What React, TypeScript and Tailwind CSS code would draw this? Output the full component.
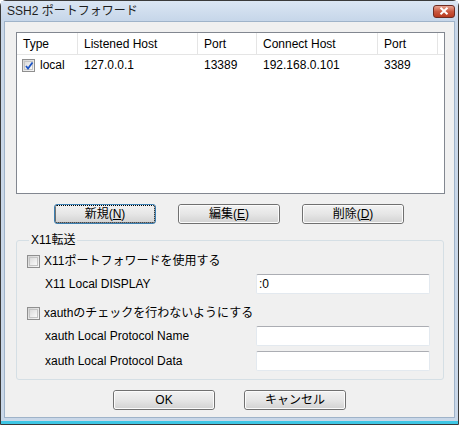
import React from "react";

const font = { fontFamily: '"Liberation Sans", "Noto Sans CJK JP", sans-serif' };

const CheckBox = ({ checked = false }: { checked?: boolean }) => (
  <span className="relative inline-flex h-[13px] w-[13px] shrink-0 items-center justify-center border border-[#8f8f8f] bg-gradient-to-br from-[#d4d4d4] to-[#f7f7f7]">
    <span className="h-[9px] w-[9px] border border-[#c4c4c4] bg-gradient-to-br from-[#dcdcdc] to-[#fafafa]" />
    {checked && (
      <svg className="absolute left-[1px] top-[1px]" width="10" height="10" viewBox="0 0 10 10">
        <path d="M2 5 L4 7.5 L8.5 1.5" fill="none" stroke="#1d54c4" strokeWidth="1.8" />
      </svg>
    )}
  </span>
);

const Button = ({ label, focused = false }: { label: React.ReactNode; focused?: boolean }) => (
  <button
    className={`flex h-[20px] w-[102px] items-center justify-center rounded-[3px] border text-[12px] text-black ${
      focused ? "border-[#3c7fb1]" : "border-[#707070]"
    } bg-gradient-to-b from-[#f2f2f2] via-[#e6e6e6] to-[#d2d2d2]`}
  >
    <span
      className={`flex h-full w-full items-center justify-center rounded-[2px] ${
        focused ? "border border-dotted border-black" : "border border-[#fbfbfb]"
      }`}
    >
      {label}
    </span>
  </button>
);

const TextBox = ({ value = "" }: { value?: string }) => (
  <div className="flex h-[20px] w-[174px] items-center rounded-[2px] border border-[#e3e9ef] border-t-[#abadb3] bg-white px-[2px] text-[12px] text-black">
    {value}
  </div>
);

const columns = [
  { name: "Type", w: "w-[61px]" },
  { name: "Listened Host", w: "w-[120px]" },
  { name: "Port", w: "w-[59px]" },
  { name: "Connect Host", w: "w-[121px]" },
  { name: "Port", w: "w-[60px]" },
];

export default function App() {
  return (
    <div className="h-[425px] w-[459px] overflow-hidden bg-white" style={font}>
      <div className="flex h-full w-full flex-col rounded-t-[6px] border border-[#3a3a3a] bg-[#c9d7e8]">
        {/* title bar */}
        <div className="flex h-[20px] items-center justify-between bg-gradient-to-b from-[#dbe6f3] to-[#c6d6e9] pl-[6px] pr-[3px]">
          <span className="text-[12px] text-[#1e1e1e]">SSH2 ポートフォワード</span>
          <div className="flex h-[13px] w-[22px] items-center justify-center rounded-[3px] border border-[#6d2b22] bg-gradient-to-b from-[#e8a493] via-[#c9583f] to-[#b9391d]">
            <svg width="10" height="8" viewBox="0 0 10 8">
              <path d="M1.5 0.8 L8.5 7.2 M8.5 0.8 L1.5 7.2" stroke="#ffffff" strokeWidth="2" />
            </svg>
          </div>
        </div>

        <div className="flex flex-1 px-[3px] pb-[3px]">
          <div className="flex flex-1 flex-col border border-[#9fb3c9] bg-[#f0f0f0] text-[12px] text-black">
            {/* list view */}
            <div className="ml-[11px] mt-[10px] h-[162px] w-[429px] border border-[#828790] bg-white">
              <div className="flex h-[22px] border-b border-[#e5e5e5]">
                {columns.map((c, i) => (
                  <div key={i} className={`${c.w} flex items-center border-r border-[#e5e5e5] pl-[6px]`}>
                    {c.name}
                  </div>
                ))}
              </div>
              <div className="flex h-[20px] items-center">
                <div className="flex w-[61px] items-center gap-[5px] pl-[5px]">
                  <CheckBox checked />
                  <span>local</span>
                </div>
                <div className="w-[120px] pl-[6px]">127.0.0.1</div>
                <div className="w-[59px] pl-[6px]">13389</div>
                <div className="w-[121px] pl-[6px]">192.168.0.101</div>
                <div className="w-[60px] pl-[6px]">3389</div>
              </div>
            </div>

            {/* list buttons */}
            <div className="ml-[49px] mt-[10px] flex gap-[22px]">
              <Button focused label={<>新規(<u>N</u>)</>} />
              <Button label={<>編集(<u>E</u>)</>} />
              <Button label={<>削除(<u>D</u>)</>} />
            </div>

            {/* X11 forwarding group */}
            <fieldset className="ml-[11px] mt-[9px] h-[147px] w-[428px] rounded-[3px] border border-[#d5dfe5] px-[10px]">
              <legend className="ml-[2px] px-[2px] leading-[14px]">X11転送</legend>
              <div className="mt-[5px] flex items-center gap-[4px]">
                <CheckBox />
                <span>X11ポートフォワードを使用する</span>
              </div>
              <div className="mt-[4px] flex items-center justify-between pl-[18px] pr-[3px]">
                <span>X11 Local DISPLAY</span>
                <TextBox value=":0" />
              </div>
              <div className="mt-[10px] flex items-center gap-[4px]">
                <CheckBox />
                <span>xauthのチェックを行わないようにする</span>
              </div>
              <div className="mt-[4px] flex items-center justify-between pl-[18px] pr-[3px]">
                <span>xauth Local Protocol Name</span>
                <TextBox />
              </div>
              <div className="mt-[5px] flex items-center justify-between pl-[18px] pr-[3px]">
                <span>xauth Local Protocol Data</span>
                <TextBox />
              </div>
            </fieldset>

            {/* dialog buttons */}
            <div className="ml-[108px] mt-[10px] flex gap-[29px]">
              <Button label="OK" />
              <Button label="キャンセル" />
            </div>
          </div>
        </div>
        <div className="h-[3px] bg-[#3ec6e4]" />
      </div>
    </div>
  );
}
